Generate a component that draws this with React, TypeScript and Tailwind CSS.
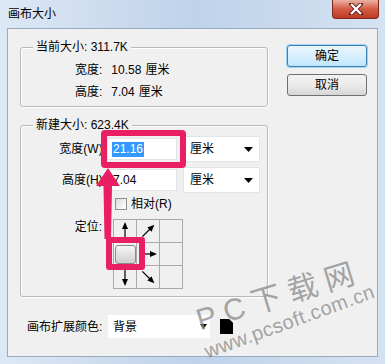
import React from 'react';

const GroupBox: React.FC<{ title: string; className?: string; children?: React.ReactNode }> = ({ title, className, children }) => (
  <div className={`relative border border-[#b9b9b9] rounded-[3px] shadow-[inset_1px_1px_0_#ffffff,1px_1px_0_#ffffff] ${className ?? ''}`}>
    <span className="absolute -top-[11px] left-[12px] bg-[#f0f0f0] px-[3px] leading-[20px]">{title}</span>
    {children}
  </div>
);

const Arrow: React.FC<{ dir: 'up' | 'ne' | 'right' | 'se' | 'down' }> = ({ dir }) => {
  const rot = { up: -90, ne: -45, right: 0, se: 45, down: 90 }[dir];
  return (
    <svg width="22" height="22" viewBox="0 0 22 22">
      <g transform={`rotate(${rot} 11 11)`}>
        <line x1="3" y1="11" x2="16" y2="11" stroke="#000" strokeWidth="1.2" />
        <polygon points="20,11 13,8 13,14" fill="#000" />
      </g>
    </svg>
  );
};

const Select: React.FC<{ value: string; className?: string }> = ({ value, className }) => (
  <div className={`flex items-center justify-between bg-white border border-[#e1e4e8] pl-[6px] pr-[6px] ${className ?? ''}`}>
    <span>{value}</span>
    <svg width="9" height="5" viewBox="0 0 9 5"><polygon points="0,0 9,0 4.5,5" fill="#000" /></svg>
  </div>
);

export default function App() {
  const cells: (React.ReactNode)[] = [
    <Arrow dir="up" />, <Arrow dir="ne" />, null,
    <div className="w-[21px] h-[19px] rounded-[3px] border border-[#8a8a8a] bg-linear-to-b from-[#f6f6f6] to-[#cfcfcf]" />, <Arrow dir="right" />, null,
    <Arrow dir="down" />, <Arrow dir="se" />, null,
  ];

  return (
    <div className="relative w-[385px] h-[364px] overflow-hidden flex flex-col bg-linear-to-r from-[#dde8f5] via-[#bed2ea] to-[#d5e2f2] text-[12px] text-black font-['Liberation_Sans','Noto_Sans_CJK_SC',sans-serif]">
      {/* title bar */}
      <div className="h-[28px] flex items-start justify-between">
        <span className="ml-[8px] mt-[4px] leading-[20px]">画布大小</span>
        <div className="mr-[6px] w-[47px] h-[19px] rounded-b-[4px] border border-t-0 border-[#7d2a20] bg-linear-to-b from-[#eab0a4] via-[#d35a45] to-[#c03a24] flex items-center justify-center">
          <svg width="14" height="12" viewBox="0 0 14 12">
            <path d="M2 1 L12 11 M12 1 L2 11" stroke="#5a1a12" strokeWidth="4" strokeLinecap="square" />
            <path d="M2 1 L12 11 M12 1 L2 11" stroke="#ffffff" strokeWidth="2.4" />
          </svg>
        </div>
      </div>

      {/* client area */}
      <div className="mx-[7px] mb-[7px] flex-1 bg-[#f0f0f0] border border-[#9aaabf] flex flex-col">
        <div className="flex pt-[18px] pl-[12px]">
          <div className="w-[248px] flex flex-col">
            <GroupBox title="当前大小: 311.7K" className="h-[60px] pt-[11px] pl-[54px]">
              <div className="flex leading-[22px]">
                <span>宽度:</span><span className="ml-[9px]">10.58</span><span className="ml-[4px]">厘米</span>
              </div>
              <div className="flex leading-[22px]">
                <span>高度:</span><span className="ml-[9px]">7.04</span><span className="ml-[4px]">厘米</span>
              </div>
            </GroupBox>

            <GroupBox title="新建大小: 623.4K" className="mt-[18px] h-[172px] pt-[10px]">
              <div className="flex items-center h-[26px]">
                <span className="w-[85px] text-right">宽度(W):</span>
                <div className="ml-[1px] w-[70px] h-[22px] bg-white border border-[#e1e4e8] flex items-center pl-[4px]">
                  <span className="bg-[#3399ff] text-white leading-[15px] px-[1px]">21.16</span>
                </div>
                <Select value="厘米" className="ml-[6px] w-[77px] h-[26px]" />
              </div>
              <div className="flex items-center h-[26px] mt-[5px]">
                <span className="w-[85px] text-right">高度(H):</span>
                <div className="ml-[1px] w-[70px] h-[22px] bg-white border border-[#e1e4e8] flex items-center pl-[5px]">7.04</div>
                <Select value="厘米" className="ml-[6px] w-[77px] h-[26px]" />
              </div>
              <div className="flex items-center h-[14px] mt-[4px] ml-[94px]">
                <div className="w-[12px] h-[12px] border border-[#8f8f8f] bg-linear-to-br from-[#dcdcdc] to-[#ffffff]" />
                <span className="ml-[4px] leading-[14px]">相对(R)</span>
              </div>
              <div className="flex items-start mt-[8px]">
                <span className="w-[81px] text-right leading-[20px] -mt-[2px]">定位:</span>
                <div className="ml-[11px] grid grid-cols-[repeat(3,23px)] border-l border-t border-[#a9a9a9]">
                  {cells.map((c, i) => (
                    <div key={i} className="w-[23px] h-[23px] border-r border-b border-[#a9a9a9] flex items-center justify-center">
                      {c}
                    </div>
                  ))}
                </div>
              </div>

              {/* pink highlights */}
              <div className="absolute left-[80px] top-[4px] w-[85px] h-[38px] border-[6px] border-[#e91e63] rounded-[4px]" />
              <div className="absolute left-[85px] top-[111px] w-[39px] h-[33px] border-[6px] border-[#e91e63] rounded-[3px]" />
              <svg className="absolute left-[74px] top-[41px]" width="26" height="73" viewBox="0 0 26 73">
                <polygon points="13,1 25,19 17,19 16,72 9.5,72 8.5,19 1,19" fill="#e91e63" />
              </svg>
            </GroupBox>
          </div>

          <div className="ml-[19px] -mt-[2px] flex flex-col gap-[7px]">
            <button className="w-[80px] h-[22px] rounded-[3px] border border-[#3c7fb1] bg-linear-to-b from-[#eaf6fd] via-[#d9effc] to-[#bee6fd] shadow-[0_0_0_1px_#9fd4f5] leading-[20px]">确定</button>
            <button className="w-[80px] h-[22px] rounded-[3px] border border-[#707070] bg-linear-to-b from-[#f2f2f2] via-[#ebebeb] to-[#d6d6d6] leading-[20px]">取消</button>
          </div>
        </div>

        <div className="flex items-center mt-[18px] pl-[19px] h-[23px]">
          <span className="w-[80px]">画布扩展颜色:</span>
          <div className="ml-[1px] w-[102px] h-[23px] bg-white flex items-center justify-between pl-[5px] pr-[3px]">
            <span>背景</span>
            <svg width="7" height="5" viewBox="0 0 7 5"><polygon points="0,0 7,0 3.5,5" fill="#000" /></svg>
          </div>
          <div className="ml-[10px] w-[13px] h-[15px] bg-black [clip-path:polygon(0_0,70%_0,100%_25%,100%_100%,0_100%)]" />
        </div>
      </div>

      {/* watermark */}
      <span className="absolute left-[197px] top-[306px] leading-[30px] text-[30px] tracking-[8px] text-[#8a8a8a] opacity-75 origin-left -rotate-[17deg] whitespace-nowrap pointer-events-none">PC下载网</span>
      <span className="absolute left-[205px] top-[342px] leading-[20px] text-[20px] tracking-[0.5px] text-[#8a8a8a] opacity-75 origin-left -rotate-[20deg] whitespace-nowrap pointer-events-none">www.pcsoft.com.cn</span>
    </div>
  );
}
